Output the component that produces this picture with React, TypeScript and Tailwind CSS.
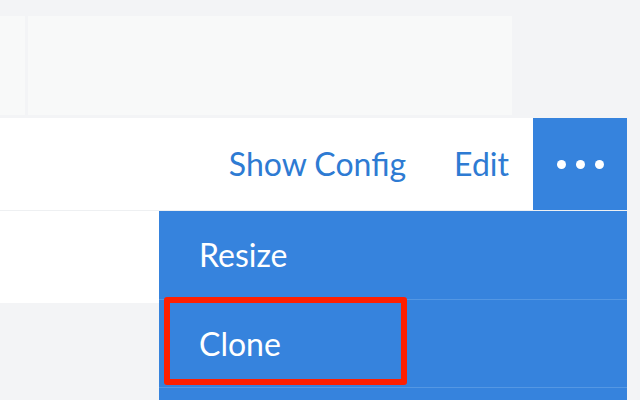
const menuItems = ['Resize', 'Clone', ''];

export default function App() {
  return (
    <div
      className="w-[640px] h-[400px] overflow-hidden bg-[#f3f4f6]"
      style={{ fontFamily: 'Lato, "Open Sans", sans-serif' }}
    >
      {/* Top panel */}
      <div className="pt-4 flex">
        <div className="flex w-[512px] h-[99px] gap-[3px]">
          <div className="w-[25px] bg-[#f8f9f9]" />
          <div className="flex-1 bg-[#f8f9f9]" />
        </div>
      </div>

      {/* Card */}
      <div className="relative mt-[3px] w-[627px]">
        <div className="flex h-[93px] bg-white border-b border-[#eef0f2]">
          <div className="flex-1 flex items-center justify-end gap-[48px] pr-6 text-[32px] text-[#2e7bd3] leading-none">
            <span>Show Config</span>
            <span>Edit</span>
          </div>
          <button className="w-[94px] bg-[#3683dd] flex items-center justify-center gap-[10px]">
            <span className="w-[9px] h-[9px] rounded-full bg-white" />
            <span className="w-[9px] h-[9px] rounded-full bg-white" />
            <span className="w-[9px] h-[9px] rounded-full bg-white" />
          </button>
        </div>
        <div className="h-[92px] bg-white" />

        {/* Dropdown menu */}
        <div className="absolute left-[159px] right-0 top-[93px] bg-[#3683dd] text-white text-[32px] leading-none">
          {menuItems.map((item, i) => (
            <div
              key={i}
              className={`h-[88px] flex items-center pl-10 ${i > 0 ? 'border-t border-[#5497e3]' : ''}`}
            >
              {item}
            </div>
          ))}
          {/* highlight box */}
          <div className="absolute left-[5px] top-[86px] w-[243px] h-[88px] border-[6px] border-[#fe1f00] rounded-[3px]" />
        </div>
      </div>
    </div>
  );
}
